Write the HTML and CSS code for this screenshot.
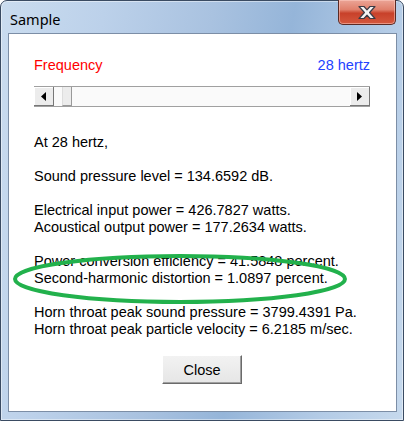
FILE: index.html
```html
<!DOCTYPE html>
<html lang="en">
<head>
  <meta charset="UTF-8" />
  <title>Sample</title>
  <link rel="stylesheet" href="styles.css">
</head>
<body>
  <div class="window">

    <!-- title bar -->
    <div class="titlebar">
      <span class="title">Sample</span>
      <div class="close-x">
        <svg width="24" height="15" viewBox="0 0 24 15">
          <path d="M4 1.5h5l3 3.4 3-3.4h5l-5.4 6 5.4 6h-5l-3-3.4-3 3.4H4l5.4-6z" fill="#f4f4f4" stroke="#3b3b45" stroke-width="1.2" stroke-linejoin="round"/>
        </svg>
      </div>
    </div>

    <!-- dialog body -->
    <div class="client">
      <div class="freq-row">
        <span class="freq-label">Frequency</span>
        <span class="freq-value">28 hertz</span>
      </div>

      <div class="scrollbar">
        <div class="sb-btn">
          <svg width="5" height="9" viewBox="0 0 5 9"><path d="M5 0v9L0 4.5z" fill="#000"/></svg>
        </div>
        <div class="sb-track">
          <div class="sb-thumb"></div>
        </div>
        <div class="sb-btn">
          <svg width="5" height="9" viewBox="0 0 5 9"><path d="M0 0v9l5-4.5z" fill="#000"/></svg>
        </div>
      </div>

      <div class="results">
        <p>At 28 hertz,</p>
        <p>Sound pressure level = 134.6592 dB.</p>
        <p>Electrical input power = 426.7827 watts.<br>Acoustical output power = 177.2634 watts.</p>
        <p class="marked">Power conversion efficiency = 41.5848 percent.<br>Second-harmonic distortion = 1.0897 percent.
          <svg class="ring" width="340" height="58" viewBox="0 0 340 58">
            <ellipse cx="170" cy="28" rx="165" ry="23" fill="none" stroke="#22b14c" stroke-width="4"/>
          </svg>
        </p>
        <p>Horn throat peak sound pressure = 3799.4391 Pa.<br>Horn throat peak particle velocity = 6.2185 m/sec.</p>
      </div>

      <div class="actions">
        <button class="btn">Close</button>
      </div>
    </div>
  </div>
</body>
</html>
```

FILE: styles.css
```css
*{box-sizing:border-box}
body{margin:0;background:#fff}

.window{
  width:404px;
  height:421px;
  display:flex;
  flex-direction:column;
  padding:0 6px 8px 7px;
  border:1px solid #3a4b62;
  border-radius:7px 7px 0 0;
  background:linear-gradient(100deg,#cadcef 0%,#bcd1ea 22%,#a9c2e0 45%,#95b5d9 62%,#b3cbe6 82%,#c6d9ed 100%);
  box-shadow:inset 0 0 0 1px rgba(255,255,255,.45);
}

/* title bar */
.titlebar{
  height:32px;
  flex-shrink:0;
  display:flex;
  justify-content:space-between;
  align-items:flex-start;
}
.title{
  font-family:"Noto Sans",sans-serif;
  font-size:14.5px;
  color:#000;
  margin:8px 0 0 2px;
  line-height:20px;
}
.close-x{
  width:58px;
  height:25px;
  margin:-1px 1px 0 0;
  display:flex;
  align-items:center;
  justify-content:center;
  border:1px solid #5a2a24;
  border-top:none;
  border-radius:0 0 5px 5px;
  background:linear-gradient(#eba597 0%,#e0806c 40%,#c8412a 55%,#d4583e 100%);
  box-shadow:inset 0 0 0 1px rgba(255,210,200,.5);
}

/* client area */
.client{
  flex:1;
  background:#fff;
  border:1px solid #7c8ea6;
  padding:23px 26px 0 25px;
  font-family:"Liberation Sans",Arial,sans-serif;
  font-size:14.5px;
  color:#000;
}

.freq-row{display:flex;justify-content:space-between;line-height:17px}
.freq-label{color:#ff0000}
.freq-value{color:#2343ff}

.scrollbar{
  display:flex;
  height:21px;
  margin-top:12px;
  border-top:1px solid #a0a0a0;
  border-bottom:1px solid #a0a0a0;
  background:#f6f6f6;
}
.sb-btn{
  width:20px;
  display:flex;
  align-items:center;
  justify-content:center;
  background:#ececec;
  border-right:1px solid #777;
  border-bottom:1px solid #777;
  box-shadow:inset 1px 1px 0 #fff;
}
.sb-track{
  flex:1;
  display:flex;
  padding-left:8px;
  background:#fafafa;
}
.sb-thumb{
  width:10px;
  background:#ececec;
  border-right:1px solid #999;
  border-left:1px solid #ddd;
  border-bottom:1px solid #999;
}

.results{margin-top:27px;line-height:17px}
.results p{margin:0 0 17px}
.marked{position:relative}
.ring{position:absolute;left:-24px;top:-2px;pointer-events:none}

.actions{display:flex;justify-content:center;margin-top:3px}
.btn{
  width:80px;
  height:29px;
  font-family:"Liberation Sans",Arial,sans-serif;
  font-size:14.5px;
  color:#000;
  background:linear-gradient(#f2f2f2,#e6e6e6);
  border:1px solid;
  border-color:#fff #6a6a6a #6a6a6a #fff;
  box-shadow:inset -1px -1px 0 #a0a0a0;
  padding:0;
}
```
